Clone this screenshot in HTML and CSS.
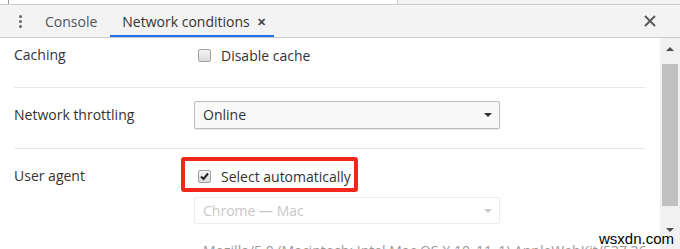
FILE: index.html
```html
<!DOCTYPE html>
<html lang="en">

<head>
    <meta http-equiv="Content-Type" content="text/html; charset=UTF-8">
    <title>Network conditions</title>
    <link rel="stylesheet" href="styles.css">
</head>

<body>
    <div class="peek">
        <div class="peek-left"></div>
        <div class="peek-right"><span class="peek-code">background-color</span></div>
    </div>

    <nav class="tabbar">
        <span class="kebab"><i></i><i></i><i></i></span>
        <span class="tab">Console</span>
        <span class="tab active">Network conditions <b class="tab-x">&#x2715;</b></span>
        <span class="spacer"></span>
        <svg class="close" width="12" height="12" viewBox="0 0 12 12">
            <path d="M1 1L11 11M11 1L1 11" stroke="#5a5a5a" stroke-width="2" />
        </svg>
    </nav>

    <div class="panel">
        <main class="content">
            <section class="row first">
                <div class="label">Caching</div>
                <div class="field">
                    <label class="check"><span class="box"></span>Disable cache</label>
                </div>
            </section>

            <section class="row">
                <div class="label">Network throttling</div>
                <div class="field">
                    <div class="select">Online<span class="caret"></span></div>
                </div>
            </section>

            <section class="row last">
                <div class="label">User agent</div>
                <div class="field">
                    <label class="check marked">
                        <span class="box on">
                            <svg width="9" height="9" viewBox="0 0 9 9"><path d="M1 4.5L3.5 7L8 1.5" fill="none" stroke="#222" stroke-width="2" /></svg>
                        </span>Select automatically
                    </label>
                    <div class="select disabled">Chrome &mdash; Mac<span class="caret"></span></div>
                    <div class="ua">Mozilla/5.0 (Macintosh; Intel Mac OS X 10_11_1) AppleWebKit/537.36</div>
                </div>
            </section>
        </main>

        <aside class="scrollbar">
            <span class="arrow up"></span>
            <span class="thumb"></span>
            <span class="arrow down"></span>
        </aside>
    </div>

    <span class="watermark">wsxdn.com</span>
</body>

</html>
```

FILE: styles.css
```css
html, body {
    height: 100%;
}

body {
    margin: 0;
    padding: 0;
    overflow: hidden;
    font-family: 'Open Sans', 'Noto Sans', sans-serif;
    font-size: 14px;
    color: #333;
    background: #fff;
}

/* sliver of the panel above */
.peek {
    display: flex;
    height: 4px;
    overflow: hidden;
}

.peek-left {
    width: 388px;
    border-left: solid 1px #999;
    margin-left: 8px;
}

.peek-right {
    flex: 1;
    background: #f3f3f3;
    border-left: solid 1px #ccc;
    padding-left: 20px;
}

.peek-code {
    display: inline-block;
    margin-top: -6px;
    border: dashed 1px #d33;
    color: #c33;
    font-family: 'DejaVu Sans Mono', monospace;
    font-size: 11px;
    line-height: 9px;
}

.tabbar {
    display: flex;
    align-items: center;
    height: 32px;
    background: #f3f3f3;
    border-top: solid 1px #ccc;
    border-bottom: solid 1px #ccc;
}

.kebab {
    display: flex;
    flex-direction: column;
    gap: 2px;
    width: 3px;
    margin: 0 20px 0 19px;
}

.kebab i {
    display: block;
    width: 3px;
    height: 3px;
    border-radius: 50%;
    background: #666;
}

.tab {
    display: flex;
    align-items: center;
    height: 100%;
    padding: 0 13px 0 3px;
    font-size: 14px;
    color: #555;
    box-sizing: border-box;
}

.tab.active {
    padding: 2px 8px 0 12px;
    color: #333;
    border-bottom: solid 2px #1a73e8;
}

.tab-x {
    margin-left: 7px;
    font-size: 11px;
    font-weight: bold;
    color: #444;
}

.spacer {
    flex: 1;
}

.close {
    margin-right: 24px;
}

.panel {
    display: flex;
    height: 212px;
}

.content {
    flex: 1;
    min-width: 0;
    padding: 0 15px 0 14px;
    overflow: hidden;
}

.row {
    display: flex;
    border-bottom: solid 1px #e8e8e8;
    padding: 13px 0 19px;
}

.row.first {
    padding: 3px 0 18px;
}

.row.last {
    border-bottom: 0;
    padding-top: 13px;
}

.label {
    flex-shrink: 0;
    width: 180px;
    line-height: 28px;
    font-size: 14px;
    color: #333;
}

.field {
    display: flex;
    flex-direction: column;
    min-width: 0;
}

.check {
    position: relative;
    display: flex;
    align-items: center;
    height: 28px;
    padding-left: 4px;
    font-size: 14px;
    color: #333;
}

/* red annotation frame over the checkbox */
.check.marked:before {
    content: "";
    position: absolute;
    left: -13px;
    top: -5px;
    width: 169px;
    height: 27px;
    border: solid 4px #f2261b;
    border-radius: 3px;
}

.box {
    display: flex;
    align-items: center;
    justify-content: center;
    width: 11px;
    height: 11px;
    margin-right: 10px;
    border: solid 1px #a0a0a0;
    border-radius: 2px;
    background: linear-gradient(#f4f4f4, #dcdcdc);
}

.select {
    position: relative;
    width: 296px;
    height: 26px;
    padding-left: 8px;
    line-height: 26px;
    font-size: 14px;
    color: #333;
    background: #f9f9f9;
    border: solid 1px #bcbcbc;
    border-radius: 2px;
    box-shadow: 0 1px 1px rgba(0, 0, 0, .08);
}

.caret {
    position: absolute;
    right: 7px;
    top: 11px;
    border-left: solid 4px transparent;
    border-right: solid 4px transparent;
    border-top: solid 4px #333;
}

.select.disabled {
    margin-top: 7px;
    height: 25px;
    line-height: 25px;
    color: #c8c8c8;
    background: #fff;
    border-color: #ececec;
    box-shadow: none;
}

.select.disabled .caret {
    border-top-color: #c8c8c8;
}

.ua {
    margin-top: 17px;
    padding-left: 9px;
    white-space: nowrap;
    font-size: 14px;
    color: #999;
}

.scrollbar {
    display: flex;
    flex-direction: column;
    align-items: center;
    width: 20px;
    background: #f1f1f1;
}

.arrow {
    display: block;
    margin: 9px 0;
    border-left: solid 4px transparent;
    border-right: solid 4px transparent;
}

.arrow.up {
    border-bottom: solid 4px #505050;
}

.arrow.down {
    margin-top: 22px;
    border-top: solid 4px #505050;
}

.thumb {
    display: block;
    width: 16px;
    height: 142px;
    margin-top: 4px;
    background: #c1c1c1;
}

.watermark {
    position: absolute;
    left: 599px;
    top: 230px;
    font-family: 'Liberation Sans', Arial, sans-serif;
    font-size: 15px;
    color: #000;
}
```
